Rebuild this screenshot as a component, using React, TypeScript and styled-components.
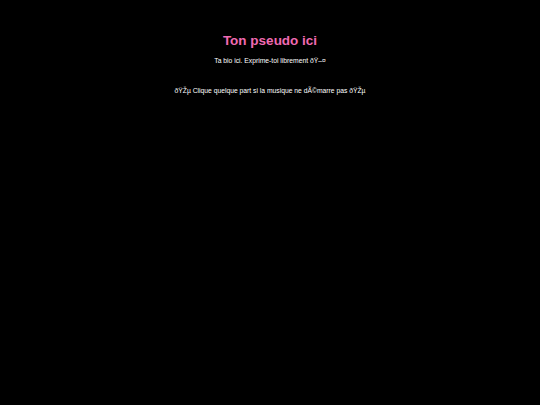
import React from 'react'
import styled, { createGlobalStyle } from 'styled-components'

const GlobalStyle = createGlobalStyle`
html, body {
  margin: 0;
  padding: 0;
  background: #000;
}

body {
  min-height: 405px;
  font-family: "Liberation Sans", Arial, sans-serif;
  color: #fff;
}
`;

const Page = styled.main`
display: flex;
flex-direction: column;
align-items: center;
text-align: center;
padding-top: 33px;
`;

const Pseudo = styled.h1`
margin: 0;
font-size: 13.5px;
line-height: 16px;
font-weight: bold;
color: #f06ab2;
`;

type TextProps = {
  gap?: number;
}

const Line = styled.p`
margin: ${({ gap = 0 }: TextProps) => `${gap}px`} 0 0;
font-size: 6.75px;
line-height: 8px;
color: #fff;
`;

export default () => {
  return (
    <>
      <GlobalStyle />
      <Page>
        <Pseudo>Ton pseudo ici</Pseudo>
        <Line gap={8}>Ta bio ici. Exprime-toi librement ðŸ–¤</Line>
        <Line gap={22}>ðŸŽµ Clique quelque part si la musique ne dÃ©marre pas ðŸŽµ</Line>
      </Page>
    </>
  )
}
